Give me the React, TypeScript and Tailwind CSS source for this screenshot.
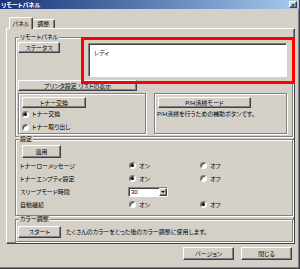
import type { ReactNode } from "react";

const raised =
  "border border-t-white border-l-white border-r-[#404040] border-b-[#404040] shadow-[inset_-1px_-1px_0_#808080]";
const sunken =
  "border border-t-[#808080] border-l-[#808080] border-r-white border-b-white shadow-[inset_1px_1px_0_#404040]";

function Btn({ className = "", children }: { className?: string; children: ReactNode }) {
  return (
    <div className={`flex shrink-0 items-center justify-center bg-[#d4d0c8] ${raised} ${className}`}>
      {children}
    </div>
  );
}

function Group({ label, className = "", children }: { label?: string; className?: string; children?: ReactNode }) {
  return (
    <div className={`relative shrink-0 border border-[#808080] shadow-[inset_1px_1px_0_#fff,1px_1px_0_#fff] ${className}`}>
      {label && (
        <span className="absolute -top-[4px] left-[3px] bg-[#d4d0c8] px-[1px]">{label}</span>
      )}
      {children}
    </div>
  );
}

function Radio({ checked, label }: { checked?: boolean; label: string }) {
  return (
    <div className="flex items-center gap-[3px]">
      <span className={`flex h-[7px] w-[7px] items-center justify-center rounded-full bg-white ${sunken}`}>
        {checked && <span className="h-[3px] w-[3px] rounded-full bg-black" />}
      </span>
      <span>{label}</span>
    </div>
  );
}

const settings = [
  { label: "トナーローメッセージ", on: true },
  { label: "トナーエンプティ設定", on: true },
  { label: "スリープモード時間", select: "30" },
  { label: "自動継続", on: false },
];

export default function App() {
  return (
    <div className="relative flex h-[269px] w-[300px] flex-col border-r border-b border-r-[#404040] border-b-[#404040] bg-[#d4d0c8] text-[6px] leading-none text-black shadow-[inset_-1px_-1px_0_#808080] font-['Liberation_Sans','Noto_Sans_CJK_JP',sans-serif] [font-feature-settings:'palt']">
      {/* title bar */}
      <div className="flex h-[9px] shrink-0 items-center justify-between bg-linear-to-r from-[#1a3577] to-[#a8caee] pl-[1px] pr-[2px]">
        <span className="font-bold text-white">リモートパネル</span>
        <span className={`flex h-[7px] w-[8px] items-center justify-center bg-[#d4d0c8] text-[6px] font-bold ${raised}`}>
          ×
        </span>
      </div>

      {/* tabs */}
      <div className="ml-[9px] mt-[8px] flex h-[11px] shrink-0 items-end">
        <div className="relative z-10 -mb-px flex h-[12px] w-[24px] items-center justify-center rounded-t-[2px] border border-b-0 border-t-white border-l-white border-r-[#404040] bg-[#d4d0c8] shadow-[inset_-1px_0_0_#808080]">
          パネル
        </div>
        <div className="flex h-[9px] w-[22px] items-center justify-center rounded-t-[2px] border border-b-0 border-t-white border-l-0 border-r-[#404040] shadow-[inset_-1px_0_0_#808080]">
          調整
        </div>
      </div>

      {/* tab panel */}
      <div className={`ml-[6px] flex h-[216px] w-[289px] shrink-0 flex-col ${raised}`}>
        <Group label="リモートパネル" className="ml-[8px] mt-[8px] h-[100px] w-[278px]">
          <div className="flex flex-col pl-[2px]">
            <div className="flex items-start">
              <Btn className="mt-[4px] h-[11px] w-[42px]">ステータス</Btn>
              <div className={`ml-[28px] mt-[5px] h-[34px] w-[199px] bg-white pl-[5px] pt-[6px] ${sunken}`}>
                レディ
              </div>
            </div>
            <Btn className="mt-[3px] h-[11px] w-[119px]">プリンタ設定 リストの表示</Btn>
            <div className="mt-[2px] flex">
              <Group className="h-[41px] w-[128px]">
                <div className="flex flex-col pl-[3px] pt-[3px]">
                  <Btn className="h-[11px] w-[64px]">トナー交換</Btn>
                  <div className="mt-[2px] flex h-[8px] items-center">
                    <Radio checked label="トナー交換" />
                  </div>
                  <div className="mt-[5px] flex h-[8px] items-center">
                    <Radio label="トナー取り出し" />
                  </div>
                </div>
              </Group>
              <Group className="ml-[8px] h-[41px] w-[133px]">
                <div className="flex flex-col pl-[3px] pt-[3px]">
                  <Btn className="h-[11px] w-[93px]">P/H清掃モード</Btn>
                  <span className="-ml-[1px] mt-[3px]">P/H清掃を行うための補助ボタンです。</span>
                </div>
              </Group>
            </div>
          </div>
        </Group>

        <Group label="設定" className="ml-[8px] mt-[2px] h-[77px] w-[278px]">
          <div className="flex flex-col">
            <Btn className="ml-[6px] mt-[5px] h-[13px] w-[39px]">適用</Btn>
            <div className="mt-px grid grid-cols-[109px_71px_1fr] pl-[4px]">
              {settings.map((s) => (
                <div key={s.label} className="contents">
                  <div className="flex h-[13px] items-center">{s.label}</div>
                  {s.select ? (
                    <div className="col-span-2 flex h-[13px] items-center">
                      <div className={`-ml-px flex h-[10px] w-[40px] items-center justify-between bg-white pl-[2px] ${sunken}`}>
                        <span>{s.select}</span>
                        <span className={`flex h-[8px] w-[8px] items-center justify-center bg-[#d4d0c8] ${raised}`}>
                          <span className="h-0 w-0 border-x-[2px] border-t-[2px] border-x-transparent border-t-black" />
                        </span>
                      </div>
                    </div>
                  ) : (
                    <>
                      <div className="flex h-[13px] items-center">
                        <Radio checked={s.on} label="オン" />
                      </div>
                      <div className="flex h-[13px] items-center">
                        <Radio checked={!s.on} label="オフ" />
                      </div>
                    </>
                  )}
                </div>
              ))}
            </div>
          </div>
        </Group>

        <Group label="カラー調整" className="ml-[8px] mt-[3px] h-[23px] w-[278px]">
          <div className="flex items-start pl-[2px] pt-[6px]">
            <Btn className="h-[12px] w-[43px]">スタート</Btn>
            <span className="ml-[5px] mt-[3px]">たくさんのカラーをとった後のカラー調整に使用します。</span>
          </div>
        </Group>
      </div>

      {/* dialog buttons */}
      <div className="mt-[3px] flex justify-end gap-[7px] pr-[7px]">
        <Btn className="h-[13px] w-[51px]">バージョン</Btn>
        <Btn className="h-[13px] w-[51px]">閉じる</Btn>
      </div>

      {/* annotation highlight */}
      <div className="pointer-events-none absolute left-[81px] top-[37px] h-[47px] w-[214px] border-[3px] border-[#ff0000]" />
    </div>
  );
}
